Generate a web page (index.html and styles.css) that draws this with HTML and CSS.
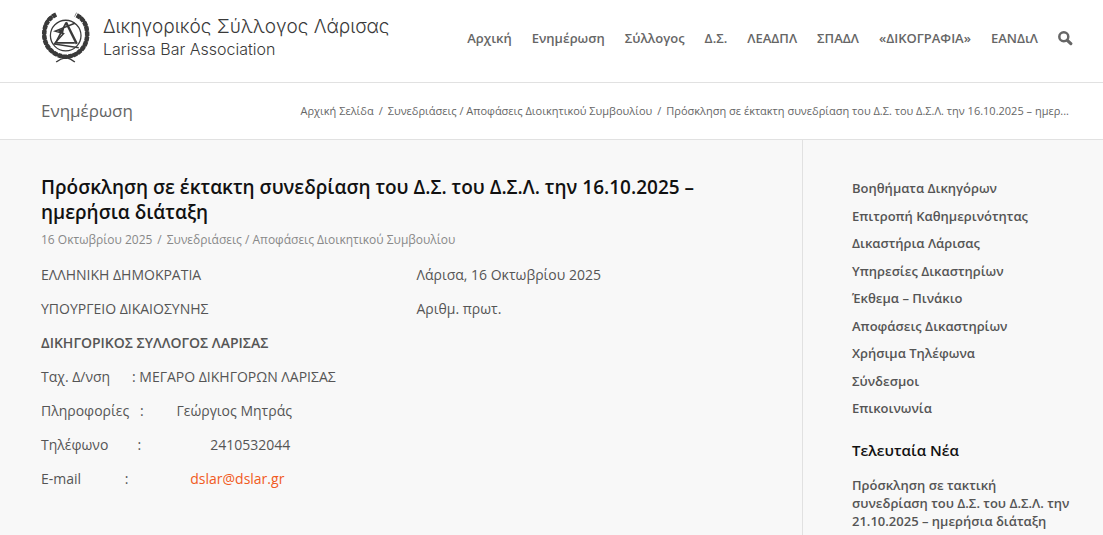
FILE: index.html
```html
<!DOCTYPE html>
<html lang="el">
<head>
<meta charset="utf-8">
<meta name="viewport" content="width=device-width, initial-scale=1">
<title>Δικηγορικός Σύλλογος Λάρισας</title>
<link rel="stylesheet" href="styles.css">
</head>
<body>
<header class="header">
  <a class="logo" href="#">
    <svg class="logo-mark" viewBox="6 5 50 52" aria-hidden="true">
      <g fill="none" stroke="#3a3a3a">
        <path d="M17 9.500C11.500 13 8.800 20 8.800 28C8.800 40 18 50 31 50.700C44 50 52.600 40 52.600 28C52.600 20 50 13 44.500 9.500" stroke-width="3.400"/>
        <path d="M21 7.500C11.500 12 8.800 20 8.800 28C8.800 40 18 50 31 50.700C44 50 52.600 40 52.600 28C52.600 20 50 12 40.500 7.500" stroke-width="4.600" stroke-dasharray="4.200 1"/>
        <circle cx="30.700" cy="29" r="15.600" stroke-width="1.300"/>
        <path d="M31 16L20.500 36.500H40" stroke-width="1.800"/>
        <path d="M31 15.500L42 37.500" stroke-width="2.400"/>
        <path d="M40 16.500L20 24.500L28.500 27L19 37.500L44 41.500" stroke-width="1.500"/>
        <path d="M22 24L29 21.500L28 27.500Z" fill="#3a3a3a" stroke="none"/>
        <path d="M21 56C24 53.500 28 52 31 51.500C34 52 37 53.500 40 56" stroke-width="1.500"/>
      </g>
    </svg>
    <span class="logo-text">
      <span class="logo-name">Δικηγορικός Σύλλογος Λάρισας</span>
      <span class="logo-sub">Larissa Bar Association</span>
    </span>
  </a>
  <nav class="menu" aria-label="Κύριο μενού">
    <a href="#">Αρχική</a>
    <a href="#">Ενημέρωση</a>
    <a href="#">Σύλλογος</a>
    <a href="#">Δ.Σ.</a>
    <a href="#">ΛΕΑΔΠΛ</a>
    <a href="#">ΣΠΑΔΛ</a>
    <a href="#">«ΔΙΚΟΓΡΑΦΙΑ»</a>
    <a href="#">ΕΑΝΔιΛ</a>
    <button class="search" type="button" aria-label="Αναζήτηση">
      <svg viewBox="0 0 15 15" aria-hidden="true"><circle cx="5.800" cy="5.800" r="4.500" fill="none" stroke="currentColor" stroke-width="2.500"/><path d="M9.300 9.300L12.800 12.600" stroke="currentColor" stroke-width="3.200" stroke-linecap="round"/></svg>
    </button>
  </nav>
</header>
<div class="title-bar">
  <a class="section-title" href="#">Ενημέρωση</a>
  <nav class="breadcrumb" aria-label="Διαδρομή">
    <a href="#">Αρχική Σελίδα</a><span class="sep">/</span><a href="#">Συνεδριάσεις / Αποφάσεις Διοικητικού Συμβουλίου</a><span class="sep">/</span><span>Πρόσκληση σε έκτακτη συνεδρίαση του Δ.Σ. του Δ.Σ.Λ. την 16.10.2025 – ημερ...</span>
  </nav>
</div>
<div class="page">
  <main class="content">
    <h1>Πρόσκληση σε έκτακτη συνεδρίαση του Δ.Σ. του Δ.Σ.Λ. την 16.10.2025 – ημερήσια διάταξη</h1>
    <div class="meta"><time>16 Οκτωβρίου 2025</time><span class="sep">/</span><a href="#">Συνεδριάσεις / Αποφάσεις Διοικητικού Συμβουλίου</a></div>
    <div class="columns">
      <div>
        <p>ΕΛΛΗΝΙΚΗ ΔΗΜΟΚΡΑΤΙΑ</p>
        <p>ΥΠΟΥΡΓΕΙΟ ΔΙΚΑΙΟΣΥΝΗΣ</p>
        <p><strong>ΔΙΚΗΓΟΡΙΚΟΣ ΣΥΛΛΟΓΟΣ ΛΑΡΙΣΑΣ</strong></p>
        <p>Ταχ. Δ/νση      : ΜΕΓΑΡΟ ΔΙΚΗΓΟΡΩΝ ΛΑΡΙΣΑΣ</p>
        <p>Πληροφορίες   :         Γεώργιος Μητράς</p>
        <p>Τηλέφωνο        :                   2410532044</p>
        <p>E-mail            :                 <a class="mail" href="mailto:dslar@dslar.gr">dslar@dslar.gr</a></p>
      </div>
      <div>
        <p>Λάρισα, 16 Οκτωβρίου 2025</p>
        <p>Αριθμ. πρωτ.</p>
      </div>
    </div>
  </main>
  <aside class="sidebar">
    <ul class="links">
      <li><a href="#">Βοηθήματα Δικηγόρων</a></li>
      <li><a href="#">Επιτροπή Καθημερινότητας</a></li>
      <li><a href="#">Δικαστήρια Λάρισας</a></li>
      <li><a href="#">Υπηρεσίες Δικαστηρίων</a></li>
      <li><a href="#">Έκθεμα – Πινάκιο</a></li>
      <li><a href="#">Αποφάσεις Δικαστηρίων</a></li>
      <li><a href="#">Χρήσιμα Τηλέφωνα</a></li>
      <li><a href="#">Σύνδεσμοι</a></li>
      <li><a href="#">Επικοινωνία</a></li>
    </ul>
    <h2>Τελευταία Νέα</h2>
    <a class="news" href="#">Πρόσκληση σε τακτική συνεδρίαση του Δ.Σ. του Δ.Σ.Λ. την 21.10.2025 – ημερήσια διάταξη</a>
    <time class="news-time">20 Οκτωβρίου 2025</time>
  </aside>
</div>
</body>
</html>
```
FILE: styles.css
```css
* {
  box-sizing: border-box;
}

body {
  display: flex;
  flex-direction: column;
  height: 100vh;
  margin: 0;
  overflow: hidden;
  background: #fff;
  color: #555;
  font: 14px/23px "Open Sans", "Noto Sans", sans-serif;
}

a {
  color: inherit;
  text-decoration: none;
}

h1,
h2,
p,
ul {
  margin: 0;
  padding: 0;
}

.header {
  display: flex;
  flex: none;
  align-items: flex-start;
  justify-content: space-between;
  padding: 12px 30px 19px 41px;
  border-bottom: 1px solid #e1e1e1;
}

.logo {
  display: flex;
  gap: 12px;
  color: #3a3a3a;
  font-family: Inter, "Liberation Sans", sans-serif;
  font-weight: 300;
  white-space: nowrap;
}

.logo-mark {
  width: 50px;
  height: 51px;
}

.logo-name,
.logo-sub {
  display: block;
}

.logo-name {
  font-size: 19px;
  line-height: 29px;
}

.logo-sub {
  font-size: 16px;
  line-height: 16px;
}

.menu {
  display: flex;
  align-items: center;
  gap: 20px;
  padding-top: 15px;
  color: #666;
  font-size: 13px;
  font-weight: 600;
  white-space: nowrap;
}

.search {
  width: 15px;
  height: 15px;
  padding: 0;
  border: 0;
  background: none;
  color: #666;
}

.search svg {
  display: block;
}

.title-bar {
  display: flex;
  flex: none;
  align-items: center;
  justify-content: space-between;
  padding: 16px 34px 17px 41px;
  border-bottom: 1px solid #e1e1e1;
  color: #666;
}

.section-title {
  font-size: 17px;
}

.breadcrumb {
  font-size: 11px;
  white-space: nowrap;
}

.sep {
  margin: 0 5px;
}

.page {
  display: flex;
  flex: 1;
  min-height: 0;
  background: #f8f8f8;
}

.content {
  flex: 1;
  padding: 35px 10px 0 41px;
}

h1 {
  max-width: 700px;
  color: #111;
  font-size: 19px;
  font-weight: 600;
  line-height: 25px;
}

.meta {
  margin: 3px 0 12px;
  color: #888;
  font-size: 12px;
}

.columns {
  display: grid;
  grid-template-columns: 1fr 1fr;
}

.columns p {
  margin-bottom: 11px;
  white-space: pre-wrap;
}

strong {
  font-weight: 600;
}

.mail {
  color: #f15a22;
}

.sidebar {
  flex: none;
  width: 301px;
  padding: 39px 30px 0 49px;
  border-left: 1px solid #e1e1e1;
}

.links {
  display: grid;
  gap: 8px;
  list-style: none;
  font-size: 13px;
  font-weight: 600;
  line-height: 1.5;
}

h2 {
  margin: 20px 0 14px;
  color: #111;
  font-size: 15px;
  font-weight: 600;
}

.news {
  display: block;
  font-size: 13px;
  font-weight: 600;
  line-height: 18px;
}

.news-time {
  display: block;
  font-size: 11px;
}
```
